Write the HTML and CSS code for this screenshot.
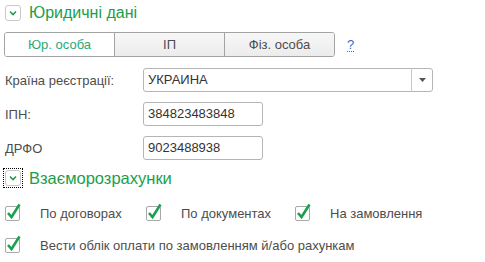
FILE: index.html
```html
<!DOCTYPE html>
<html lang="uk">
<head>
    <meta charset="UTF-8">
    <link rel="stylesheet" href="styles.css">
    <title>Юридичні дані</title>
</head>
<body>
    <div class="page">

        <div class="group-head">
            <span class="toggle">
                <svg width="8" height="6" viewBox="0 0 8 6"><path d="M1 1.5 L4 4.5 L7 1.5" fill="none" stroke="#1f9a4e" stroke-width="1.6"/></svg>
            </span>
            <span class="group-title">Юридичні дані</span>
        </div>

        <div class="tabs-row">
            <div class="tabs">
                <div class="tab active">Юр. особа</div>
                <div class="tab">ІП</div>
                <div class="tab">Фіз. особа</div>
            </div>
            <a class="help" href="#">?</a>
        </div>

        <div class="fields">
            <div class="row">
                <label class="lbl">Країна реєстрації:</label>
                <div class="select">
                    <span class="select-val">УКРАИНА</span>
                    <span class="select-btn">
                        <svg width="7" height="4" viewBox="0 0 7 4"><path d="M0 0 H7 L3.5 4 Z" fill="#555"/></svg>
                    </span>
                </div>
            </div>
            <div class="row">
                <label class="lbl">ІПН:</label>
                <div class="inp">384823483848</div>
            </div>
            <div class="row">
                <label class="lbl">ДРФО</label>
                <div class="inp">9023488938</div>
            </div>
        </div>

        <div class="group-head second">
            <span class="focus">
                <span class="toggle">
                    <svg width="8" height="6" viewBox="0 0 8 6"><path d="M1 1.5 L4 4.5 L7 1.5" fill="none" stroke="#1f9a4e" stroke-width="1.6"/></svg>
                </span>
            </span>
            <span class="group-title">Взаєморозрахунки</span>
        </div>

        <div class="checks">
            <div class="check-row">
                <div class="check c1">
                    <svg class="cb" width="16" height="18" viewBox="0 0 16 18"><rect x="0.5" y="3.5" width="14" height="14" rx="1.5" fill="#fff" stroke="#a8a8a8"/><path d="M3 10 L6.5 14 L14.5 1.5" fill="none" stroke="#1aa050" stroke-width="2.6"/></svg>
                    <span>По договорах</span>
                </div>
                <div class="check c2">
                    <svg class="cb" width="16" height="18" viewBox="0 0 16 18"><rect x="0.5" y="3.5" width="14" height="14" rx="1.5" fill="#fff" stroke="#a8a8a8"/><path d="M3 10 L6.5 14 L14.5 1.5" fill="none" stroke="#1aa050" stroke-width="2.6"/></svg>
                    <span>По документах</span>
                </div>
                <div class="check c3">
                    <svg class="cb" width="16" height="18" viewBox="0 0 16 18"><rect x="0.5" y="3.5" width="14" height="14" rx="1.5" fill="#fff" stroke="#a8a8a8"/><path d="M3 10 L6.5 14 L14.5 1.5" fill="none" stroke="#1aa050" stroke-width="2.6"/></svg>
                    <span>На замовлення</span>
                </div>
            </div>
            <div class="check-row">
                <div class="check">
                    <svg class="cb" width="16" height="18" viewBox="0 0 16 18"><rect x="0.5" y="3.5" width="14" height="14" rx="1.5" fill="#fff" stroke="#a8a8a8"/><path d="M3 10 L6.5 14 L14.5 1.5" fill="none" stroke="#1aa050" stroke-width="2.6"/></svg>
                    <span>Вести облік оплати по замовленням й/або рахункам</span>
                </div>
            </div>
        </div>

    </div>
</body>
</html>
```

FILE: styles.css
```css
body{
    margin: 0;
    background: #fff;
    font-family: "Liberation Sans", Arial, sans-serif;
    font-size: 13px;
    color: #4d4d4d;
}
.page{
    padding: 5px 0 0 5px;
}
.group-head{
    display: flex;
    align-items: center;
    height: 16px;
}
.group-head.second{
    margin-top: 10px;
}
.toggle{
    display: flex;
    align-items: center;
    justify-content: center;
    width: 14px;
    height: 14px;
    border: 1px solid #c9c9c9;
    border-radius: 3px;
    background: #fff;
}
.focus{
    margin: -2px;
    padding: 1px;
    border: 1px dotted #000;
}
.group-title{
    margin-left: 8px;
    font-size: 16px;
    color: #18a04c;
}
.second .group-title{
    font-size: 16.5px;
}
.tabs-row{
    display: flex;
    align-items: center;
    margin-top: 11px;
    margin-left: -1px;
}
.tabs{
    display: flex;
    border: 1px solid #a3a3a3;
    border-radius: 3px;
    overflow: hidden;
}
.tab{
    width: 109px;
    height: 23px;
    line-height: 23px;
    text-align: center;
    background: linear-gradient(#f7f7f7, #ececec);
    color: #4d4d4d;
    border-left: 1px solid #a3a3a3;
}
.tab:first-child{
    border-left: none;
}
.tab.active{
    background: #fff;
    color: #2aa876;
}
.help{
    margin-left: 12px;
    color: #3a68c7;
    text-decoration: none;
    border-bottom: 1px dotted #3a68c7;
    line-height: 13px;
}
.fields{
    margin-top: 11px;
    display: flex;
    flex-direction: column;
    gap: 10px;
}
.row{
    display: flex;
    align-items: center;
    height: 24px;
}
.lbl{
    width: 138px;
}
.select{
    display: flex;
    width: 288px;
    height: 22px;
    border: 1px solid #b5b5b5;
    border-radius: 3px;
    color: #333;
}
.select-val{
    flex: 1;
    line-height: 22px;
    padding-left: 4px;
}
.select-btn{
    width: 20px;
    border-left: 1px solid #c8c8c8;
    display: flex;
    align-items: center;
    justify-content: center;
}
.inp{
    width: 114px;
    height: 22px;
    line-height: 22px;
    padding-left: 4px;
    border: 1px solid #b5b5b5;
    border-radius: 3px;
    color: #333;
}
.checks{
    margin-top: 17px;
    display: flex;
    flex-direction: column;
    gap: 14px;
}
.check-row{
    display: flex;
    height: 18px;
}
.check{
    display: flex;
    align-items: flex-end;
}
.check span{
    margin-left: 19px;
    line-height: 14px;
}
.c1{ width: 141px; }
.c2{ width: 149px; }
```
